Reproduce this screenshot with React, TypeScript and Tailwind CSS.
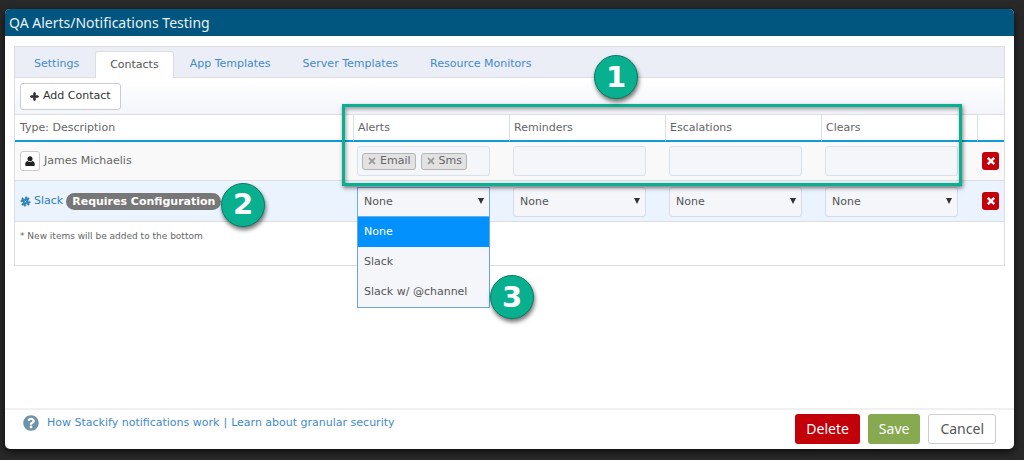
import { FaPlus, FaQuestionCircle, FaSlackHash, FaTimes } from 'react-icons/fa';

const tabs = ['Settings', 'Contacts', 'App Templates', 'Server Templates', 'Resource Monitors'];
const channels = ['Alerts', 'Reminders', 'Escalations', 'Clears'];
const slackOptions = ['None', 'Slack', 'Slack w/ @channel'];

interface StepBadgeProps {
  step: number;
  className: string;
}

const StepBadge: React.FC<StepBadgeProps> = ({ step, className }) => (
  <span
    className={`absolute z-20 flex size-11 items-center justify-center rounded-full border border-[#087a64] bg-[#08b090] text-[29px] leading-none font-bold text-white shadow-[1px_3px_4px_rgba(0,0,0,0.55)] ${className}`}
  >
    {step}
  </span>
);

const PersonIcon: React.FC = () => (
  <svg viewBox="0 0 10 10" className="size-[10px] fill-[#222]">
    <circle cx="5" cy="2.8" r="2.5" />
    <path d="M2.6 4.9C1 5.3.2 6.7.2 8.4.2 9.4.8 10 1.8 10h6.4c1 0 1.600-.6 1.600-1.600 0-1.700-.8-3.100-2.400-3.500C6.800 5.600 6 6 5 6s-1.800-.4-2.400-1.100z" />
  </svg>
);

const RemoveButton: React.FC<{ label: string }> = ({ label }) => (
  <button
    type="button"
    aria-label={label}
    className="flex h-[18px] w-[17px] items-center justify-center rounded-[3px] bg-[#c30009] text-white"
  >
    <FaTimes size={10} className="stroke-current stroke-[50]" />
  </button>
);

const Tag: React.FC<{ label: string }> = ({ label }) => (
  <span className="flex h-[17px] items-center gap-[3px] rounded-[3px] border border-[#b5b5b5] bg-[#e2e2e2] px-1 text-[#666]">
    <button type="button" aria-label={`Remove ${label}`} className="text-[#999]">
      <FaTimes size={10} />
    </button>
    {label}
  </span>
);

const TagBox: React.FC<{ channel: string; tags: string[] }> = ({ channel, tags }) => (
  <div className="flex h-[30px] w-[133px] items-center gap-[5px] rounded-[3px] border border-[#d9e1ec] bg-[#f4f6fa] px-1">
    {tags.map((tag) => (
      <Tag key={tag} label={tag} />
    ))}
    <input type="text" aria-label={channel} className="w-0 min-w-0 flex-1 outline-none" />
  </div>
);

const ChannelSelect: React.FC<{ channel: string; open: boolean }> = ({ channel, open }) => (
  <div className="relative w-[133px]">
    <select
      aria-label={`Slack ${channel}`}
      defaultValue="None"
      className={`block h-[30px] w-full appearance-none border bg-[#f4f6fa] px-1.5 text-[#555] outline-none ${
        open ? 'border-[#66afe9]' : 'rounded-[3px] border-[#d3dce8]'
      }`}
    >
      {slackOptions.map((option) => (
        <option key={option}>{option}</option>
      ))}
    </select>
    <svg viewBox="0 0 6 6" className="pointer-events-none absolute top-[11px] right-1.5 size-1.5 fill-[#333]">
      <path d="M0 0h6L3 6z" />
    </svg>
    {open && (
      <ul role="listbox" aria-label={channel} className="absolute top-full left-0 z-10 w-full border border-t-0 border-[#6ba3da] bg-[#f4f6fa]">
        {slackOptions.map((option, i) => (
          <li
            key={option}
            role="option"
            aria-selected={i === 0}
            className={`flex h-[30px] items-center px-1.5 whitespace-nowrap ${i === 0 ? 'bg-[#0391fe] text-white' : 'text-[#555]'}`}
          >
            {option}
          </li>
        ))}
      </ul>
    )}
  </div>
);

const ContactsTable: React.FC = () => (
  <table className="w-full table-fixed border-separate border-spacing-0 text-left">
    <colgroup>
      <col />
      {channels.map((channel) => (
        <col key={channel} className="w-[156px]" />
      ))}
      <col className="w-[27px]" />
    </colgroup>
    <thead>
      <tr className="h-[27px]">
        <th className="border-b-2 border-[#0e9bd8] px-[5px] font-normal">Type: Description</th>
        {channels.map((channel) => (
          <th key={channel} className="border-b-2 border-l border-b-[#0e9bd8] border-l-[#d5dfed] px-1 font-normal">
            {channel}
          </th>
        ))}
        <th aria-label="Actions" className="border-b-2 border-l border-b-[#0e9bd8] border-l-[#d5dfed]"></th>
      </tr>
    </thead>
    <tbody>
      <tr className="h-[39px] bg-[#f9f9f9]">
        <td className="border-b border-[#ddd] px-[5px]">
          <div className="flex items-center gap-1">
            <span className="flex size-5 items-center justify-center rounded-[3px] border border-[#ccc] bg-white">
              <PersonIcon />
            </span>
            James Michaelis
          </div>
        </td>
        {channels.map((channel) => (
          <td key={channel} className="border-b border-[#ddd] px-1">
            <TagBox channel={channel} tags={channel === 'Alerts' ? ['Email', 'Sms'] : []} />
          </td>
        ))}
        <td className="border-b border-[#ddd] pl-[5px]">
          <RemoveButton label="Remove James Michaelis" />
        </td>
      </tr>
      <tr className="h-[41px] bg-[#eaf3fe]">
        <td className="border-b border-[#ddd] px-[5px]">
          <div className="flex items-center gap-[3px] text-[#2c80ba]">
            <FaSlackHash size={11} className="stroke-current stroke-[30]" />
            <a href="#slack">Slack</a>
            <span className="relative rounded-full bg-[#777] px-1.5 py-px text-[11px] leading-[15px] font-bold whitespace-nowrap text-white">
              Requires Configuration
              <StepBadge step={2} className="-top-[10px] left-[155px]" />
            </span>
          </div>
        </td>
        {channels.map((channel) => (
          <td key={channel} className="border-b border-[#ddd] px-1 pt-0.5">
            <ChannelSelect channel={channel} open={channel === 'Alerts'} />
          </td>
        ))}
        <td className="border-b border-[#ddd] pl-[5px]">
          <RemoveButton label="Remove Slack" />
        </td>
      </tr>
    </tbody>
  </table>
);

export default function App() {
  return (
    <div className="flex min-h-screen bg-[#292929] pt-[9px] pr-[10px] pb-[11px] pl-[5px] font-['DejaVu_Sans',sans-serif] text-[11px] leading-4 text-[#666]">
      <div className="flex flex-1 flex-col overflow-hidden rounded-[5px] bg-white shadow-[0_3px_8px_rgba(0,0,0,0.7)]">
        <header className="flex h-[27px] items-center bg-[#00567e] px-1">
          <h1 className="font-['Noto_Sans',sans-serif] text-[14px] text-[#e8f1f6]">QA Alerts/Notifications Testing</h1>
        </header>

        <main className="flex-1 px-[9px] pt-[10px]">
          <section className="relative border border-[#ddd]">
            <nav className="flex h-[31px] items-end border-b border-[#ddd] bg-[#ebeef6] pl-[3px]">
              {tabs.map((tab) => (
                <a
                  key={tab}
                  href={`#${tab}`}
                  className={
                    tab === 'Contacts'
                      ? '-mb-px flex h-[27px] items-center rounded-t-[3px] border border-b-0 border-[#ddd] bg-white px-[14px] text-[#555]'
                      : 'flex h-[27px] items-center px-4 text-[#428bca]'
                  }
                >
                  {tab}
                </a>
              ))}
            </nav>

            <div className="flex h-[37px] items-center border-b border-[#ddd] bg-linear-to-b from-white to-[#f3f5fb] px-[5px]">
              <button
                type="button"
                className="flex h-[27px] items-center gap-1 rounded-[3px] border border-[#ccc] bg-white px-[9px] text-[#333]"
              >
                <FaPlus size={9} className="stroke-current stroke-[50]" />
                Add Contact
              </button>
            </div>

            <ContactsTable />
            <p className="h-[43px] px-[5px] pt-1.5 text-[9px]">* New items will be added to the bottom</p>

            {/* Callouts */}
            <div className="pointer-events-none absolute top-[57px] right-[42px] z-10 h-[82px] w-[620px] border-3 border-[#08b090] shadow-[1px_2px_4px_rgba(0,0,0,0.5),inset_1px_2px_4px_rgba(0,0,0,0.4)]"></div>
            <StepBadge step={1} className="top-2 right-[366px]" />
            <StepBadge step={3} className="top-[228px] right-[470px]" />
          </section>
        </main>

        <footer className="flex h-[41px] justify-between border-t-2 border-[#f0f0f0] pr-[18px] pl-[18px]">
          <div className="flex h-[26px] items-center text-[#428bca]">
            <FaQuestionCircle size={16} className="mr-2 text-[#6d93ab]" />
            <a href="#notifications">How Stackify notifications work</a>
            <span className="px-1">|</span>
            <a href="#security">Learn about granular security</a>
          </div>
          <div className="flex gap-2 pt-1 font-['Noto_Sans',sans-serif] text-[14px]">
            <button type="button" className="h-[30px] rounded-[3px] bg-[#c30009] px-[11px] text-white">
              Delete
            </button>
            <button type="button" className="h-[30px] rounded-[3px] bg-[#87a94f] px-[11px] text-white">
              Save
            </button>
            <button type="button" className="h-[30px] rounded-[3px] border border-[#ccc] bg-white px-[11px] text-[#555]">
              Cancel
            </button>
          </div>
        </footer>
      </div>
    </div>
  );
}
